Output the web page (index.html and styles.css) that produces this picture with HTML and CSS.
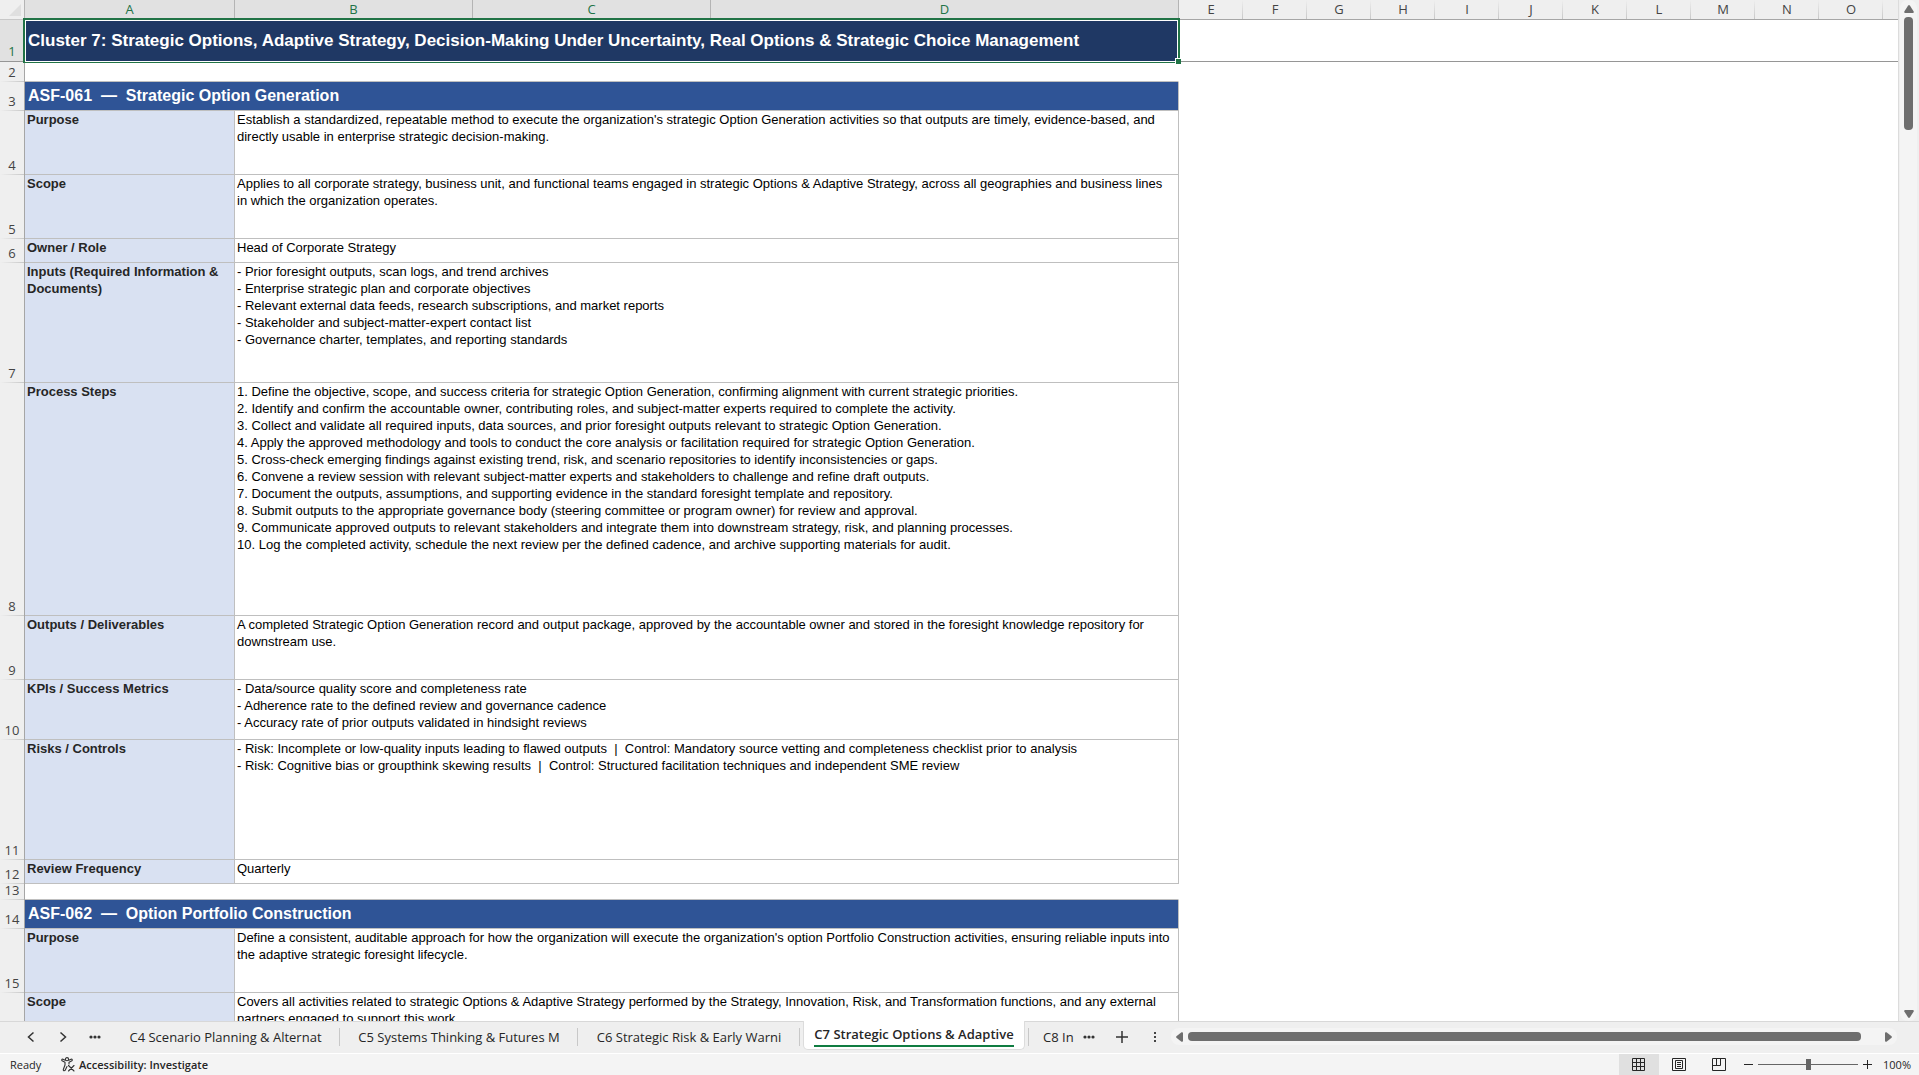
FILE: index.html
```html
<!DOCTYPE html>
<html lang="en">
<head>
<meta charset="utf-8">
<title>Strategic Foresight Workbook</title>
<link rel="stylesheet" href="styles.css">
</head>
<body>
<div class="app">
  <main class="workspace">
    <div class="sheet">
      <table class="grid">
        <colgroup>
          <col class="col-num"><col class="col-a"><col class="col-b"><col class="col-b"><col class="col-d">
          <col class="col-std"><col class="col-std"><col class="col-std"><col class="col-std"><col class="col-std"><col class="col-std"><col class="col-std"><col class="col-std"><col class="col-std"><col class="col-std"><col class="col-std"><col>
        </colgroup>
        <thead>
          <tr>
            <td class="corner"><svg width="12" height="12" viewBox="0 0 12 12"><path d="M12 0V12H0Z" fill="#dfdfdf"/></svg></td>
            <th class="picked">A</th><th class="picked">B</th><th class="picked">C</th><th class="picked">D</th>
            <th>E</th><th>F</th><th>G</th><th>H</th><th>I</th><th>J</th><th>K</th><th>L</th><th>M</th><th>N</th><th>O</th><th></th>
          </tr>
        </thead>
        <tbody>
          <tr class="h-title frozen"><th class="picked">1</th><td class="title" colspan="4">Cluster 7: Strategic Options, Adaptive Strategy, Decision-Making Under Uncertainty, Real Options &amp; Strategic Choice Management<span class="selection"></span><span class="handle"></span></td><td class="rest" colspan="12"></td></tr>
          <tr class="h-gap"><th>2</th><td class="gap" colspan="4"></td><td class="rest" colspan="12"></td></tr>
          <tr class="h-section"><th>3</th><td class="section" colspan="4">ASF-061 &nbsp;—&nbsp; Strategic Option Generation</td><td class="rest" colspan="12"></td></tr>
          <tr class="h-text"><th>4</th><td class="label">Purpose</td><td class="value" colspan="3">Establish a standardized, repeatable method to execute the organization's strategic Option Generation activities so that outputs are timely, evidence-based, and<br>directly usable in enterprise strategic decision-making.</td><td class="rest" colspan="12"></td></tr>
          <tr class="h-text"><th>5</th><td class="label">Scope</td><td class="value" colspan="3">Applies to all corporate strategy, business unit, and functional teams engaged in strategic Options &amp; Adaptive Strategy, across all geographies and business lines<br>in which the organization operates.</td><td class="rest" colspan="12"></td></tr>
          <tr class="h-line"><th>6</th><td class="label">Owner / Role</td><td class="value" colspan="3">Head of Corporate Strategy</td><td class="rest" colspan="12"></td></tr>
          <tr class="h-list"><th>7</th><td class="label">Inputs (Required Information &amp;<br>Documents)</td><td class="value" colspan="3">- Prior foresight outputs, scan logs, and trend archives<br>- Enterprise strategic plan and corporate objectives<br>- Relevant external data feeds, research subscriptions, and market reports<br>- Stakeholder and subject-matter-expert contact list<br>- Governance charter, templates, and reporting standards</td><td class="rest" colspan="12"></td></tr>
          <tr class="h-steps"><th>8</th><td class="label">Process Steps</td><td class="value" colspan="3">1. Define the objective, scope, and success criteria for strategic Option Generation, confirming alignment with current strategic priorities.<br>2. Identify and confirm the accountable owner, contributing roles, and subject-matter experts required to complete the activity.<br>3. Collect and validate all required inputs, data sources, and prior foresight outputs relevant to strategic Option Generation.<br>4. Apply the approved methodology and tools to conduct the core analysis or facilitation required for strategic Option Generation.<br>5. Cross-check emerging findings against existing trend, risk, and scenario repositories to identify inconsistencies or gaps.<br>6. Convene a review session with relevant subject-matter experts and stakeholders to challenge and refine draft outputs.<br>7. Document the outputs, assumptions, and supporting evidence in the standard foresight template and repository.<br>8. Submit outputs to the appropriate governance body (steering committee or program owner) for review and approval.<br>9. Communicate approved outputs to relevant stakeholders and integrate them into downstream strategy, risk, and planning processes.<br>10. Log the completed activity, schedule the next review per the defined cadence, and archive supporting materials for audit.</td><td class="rest" colspan="12"></td></tr>
          <tr class="h-text"><th>9</th><td class="label">Outputs / Deliverables</td><td class="value" colspan="3">A completed Strategic Option Generation record and output package, approved by the accountable owner and stored in the foresight knowledge repository for<br>downstream use.</td><td class="rest" colspan="12"></td></tr>
          <tr class="h-kpi"><th>10</th><td class="label">KPIs / Success Metrics</td><td class="value" colspan="3">- Data/source quality score and completeness rate<br>- Adherence rate to the defined review and governance cadence<br>- Accuracy rate of prior outputs validated in hindsight reviews</td><td class="rest" colspan="12"></td></tr>
          <tr class="h-list"><th>11</th><td class="label">Risks / Controls</td><td class="value" colspan="3">- Risk: Incomplete or low-quality inputs leading to flawed outputs &nbsp;|&nbsp; Control: Mandatory source vetting and completeness checklist prior to analysis<br>- Risk: Cognitive bias or groupthink skewing results &nbsp;|&nbsp; Control: Structured facilitation techniques and independent SME review</td><td class="rest" colspan="12"></td></tr>
          <tr class="h-line"><th>12</th><td class="label">Review Frequency</td><td class="value" colspan="3">Quarterly</td><td class="rest" colspan="12"></td></tr>
          <tr class="h-slim"><th>13</th><td class="gap" colspan="4"></td><td class="rest" colspan="12"></td></tr>
          <tr class="h-section"><th>14</th><td class="section" colspan="4">ASF-062 &nbsp;—&nbsp; Option Portfolio Construction</td><td class="rest" colspan="12"></td></tr>
          <tr class="h-text"><th>15</th><td class="label">Purpose</td><td class="value" colspan="3">Define a consistent, auditable approach for how the organization will execute the organization's option Portfolio Construction activities, ensuring reliable inputs into<br>the adaptive strategic foresight lifecycle.</td><td class="rest" colspan="12"></td></tr>
          <tr class="h-text"><th></th><td class="label">Scope</td><td class="value" colspan="3">Covers all activities related to strategic Options &amp; Adaptive Strategy performed by the Strategy, Innovation, Risk, and Transformation functions, and any external<br>partners engaged to support this work.</td><td class="rest" colspan="12"></td></tr>
        </tbody>
      </table>
    </div>
    <div class="vbar">
      <button class="arrow" aria-label="Scroll up"><svg width="10" height="8" viewBox="0 0 10 8"><path d="M4 .8Q5-.6 6 .8L9.7 6.500Q10 8 9 8H1Q0 8 .3 6.500Z"/></svg></button>
      <div class="vthumb"></div>
      <button class="arrow" aria-label="Scroll down"><svg width="10" height="8" viewBox="0 0 10 8"><path d="M4 7.200Q5 8.600 6 7.200L9.700 1.500Q10 0 9 0H1Q0 0 .3 1.500Z"/></svg></button>
    </div>
  </main>

  <nav class="tabbar" aria-label="Sheets">
    <div class="tabnav">
      <button aria-label="Previous sheet"><svg width="12" height="12" viewBox="0 0 12 12"><path d="M8.500 1.500L3.500 6l5 4.500" class="line"/></svg></button>
      <button aria-label="Next sheet"><svg width="12" height="12" viewBox="0 0 12 12"><path d="M3.500 1.500L8.500 6l-5 4.500" class="line"/></svg></button>
      <button aria-label="More sheets"><svg width="12" height="12" viewBox="0 0 12 12"><g fill="#333"><circle cx="2" cy="6" r="1.600"/><circle cx="6" cy="6" r="1.600"/><circle cx="10" cy="6" r="1.600"/></g></svg></button>
    </div>
    <button class="tab">C4 Scenario Planning &amp; Alternat</button>
    <button class="tab">C5 Systems Thinking &amp; Futures M</button>
    <button class="tab">C6 Strategic Risk &amp; Early Warni</button>
    <button class="tab active"><span>C7 Strategic Options &amp; Adaptive</span></button>
    <button class="tab cut">C8 In</button>
    <div class="tabtools">
      <button aria-label="Sheet list"><svg width="12" height="12" viewBox="0 0 12 12"><g fill="#333"><circle cx="2" cy="6" r="1.600"/><circle cx="6" cy="6" r="1.600"/><circle cx="10" cy="6" r="1.600"/></g></svg></button>
      <button aria-label="New sheet"><svg width="12" height="12" viewBox="0 0 12 12"><path d="M6 0v12M0 6h12" class="line"/></svg></button>
      <button aria-label="Resize tabs"><svg width="12" height="12" viewBox="0 0 12 12"><g fill="#444"><rect x="5" y="1" width="2" height="2"/><rect x="5" y="5" width="2" height="2"/><rect x="5" y="9" width="2" height="2"/></g></svg></button>
    </div>
    <div class="hbar">
      <button class="arrow" aria-label="Scroll left"><svg width="7" height="10" viewBox="0 0 7 10"><path d="M.7 4Q-.5 5 .7 6L5.500 9.700Q7 10 7 9V1Q7 0 5.500 .3Z"/></svg></button>
      <div class="hthumb"></div>
      <button class="arrow" aria-label="Scroll right"><svg width="7" height="10" viewBox="0 0 7 10"><path d="M6.300 4Q7.500 5 6.300 6L1.500 9.700Q0 10 0 9V1Q0 0 1.500 .3Z"/></svg></button>
    </div>
  </nav>

  <footer class="status">
    <span class="ready">Ready</span>
    <button class="access">
      <svg width="14" height="15" viewBox="0 0 14 15"><g fill="none" stroke="#333" stroke-width="1.100" stroke-linecap="round" stroke-linejoin="round"><circle cx="6" cy="2.200" r="1.600"/><path d="M4.200 3.200L2 2.200Q.8 2 .7 3 .7 3.700 1.500 4L4 5.200V8L2.300 12.500Q2.200 13.800 3.200 13.800 4 13.800 4.300 13L6 9.500M7.800 3.200L10 2.200Q11.200 2 11.300 3 11.300 3.700 10.500 4L8 5.200V7"/><path d="M7.500 8.500l5.500 5.500M13 8.500L7.500 14"/></g></svg>
      <span>Accessibility: Investigate</span>
    </button>
    <div class="views">
      <button class="on" aria-label="Normal view"><svg width="14" height="14" viewBox="0 0 14 14"><path d="M.5 .5h12v12H.5zM4.500 .5v12M8.500 .5v12M.5 4.500h12M.5 8.500h12" class="box"/></svg></button>
      <button aria-label="Page layout"><svg width="14" height="14" viewBox="0 0 14 14"><path d="M.5 .5h13v12H.5zM3.500 2.500h7v8h-7zM5 4.500h4M5 6.500h4M5 8.500h4" class="box"/></svg></button>
      <button aria-label="Page break preview"><svg width="14" height="14" viewBox="0 0 14 14"><path d="M.5 .5h13v12H.5zM4.500 .5v7M8.500 .5v7M.5 7.500h8" class="box"/></svg></button>
    </div>
    <div class="zoom">
      <button aria-label="Zoom out"><svg width="9" height="9" viewBox="0 0 9 9"><path d="M0 4.500h9" class="box"/></svg></button>
      <input type="range" min="0" max="100" value="50" aria-label="Zoom">
      <button aria-label="Zoom in"><svg width="9" height="9" viewBox="0 0 9 9"><path d="M0 4.500h9M4.500 0v9" class="box"/></svg></button>
      <button class="pct">100%</button>
    </div>
  </footer>
</div>
</body>
</html>
```
FILE: styles.css
```css
* { box-sizing: border-box; }

body {
  margin: 0;
  background: #efefef;
  color: #262626;
  font-family: "Open Sans", "Noto Sans", sans-serif;
}

button {
  border: 0;
  padding: 0;
  background: none;
  color: inherit;
  font: inherit;
  display: flex;
  align-items: center;
  justify-content: center;
}

svg { display: block; }
.line { fill: none; stroke: #333; stroke-width: 1.5; }
.box { fill: none; stroke: #262626; }

.app {
  height: 100vh;
  display: flex;
  flex-direction: column;
}

/* worksheet */
.workspace {
  flex: 1;
  min-height: 0;
  display: flex;
}

.sheet {
  flex: 1;
  min-width: 0;
  overflow: hidden;
  background: #fff;
  border-right: 1px solid #dcdcdc;
}

.grid {
  width: 100%;
  table-layout: fixed;
  border-collapse: separate;
  border-spacing: 0;
}

.col-num { width: 25px; }
.col-a { width: 210px; }
.col-b { width: 238px; }
.col-d { width: 468px; }
.col-std { width: 64px; }

.grid th, .grid td { padding: 0; }
.grid td { overflow: hidden; }

.grid thead tr { height: 20px; }
.grid thead th {
  background: linear-gradient(#efefef, #c8c8c8) right / 1px 100% no-repeat #efefef;
  border-bottom: 1px solid #a6a6a6;
  color: #444;
  font-size: 13px;
  font-weight: 400;
  line-height: 19px;
}
.grid thead th.picked {
  background: #e1e1e1;
  border-right: 1px solid #b4b4b4;
  color: #217346;
}
.grid thead th:last-child { background: #efefef; }
.corner {
  background: #efefef;
  border-right: 1px solid #b4b4b4;
  border-bottom: 1px solid #c8c8c8;
}
.corner svg { margin-left: 9px; }

.grid tbody th {
  background: linear-gradient(90deg, #efefef, #c8c8c8) bottom / 100% 1px no-repeat #efefef;
  border-right: 1px solid #a6a6a6;
  padding-bottom: 3px;
  color: #444;
  font-size: 13px;
  font-weight: 400;
  line-height: 13px;
  vertical-align: bottom;
}
.grid tbody th.picked { background: #e1e1e1; color: #217346; }

.h-title { height: 42px; }
.h-gap { height: 20px; }
.h-section { height: 29px; }
.h-text { height: 64px; }
.h-line { height: 24px; }
.h-list { height: 120px; }
.h-steps { height: 233px; }
.h-kpi { height: 60px; }
.h-slim { height: 16px; }

.title, .section, .label, .value { font-family: "Liberation Sans", Arial, sans-serif; }

.grid .title {
  position: relative;
  overflow: visible;
  padding-left: 3px;
  background: #1f3864;
  color: #fff;
  font-size: 17px;
  font-weight: 700;
}
.frozen > * { border-bottom: 1px solid #969696; }
.selection {
  position: absolute;
  inset: -2px -1px -2px -2px;
  border: 2px solid #217346;
  border-bottom-width: 1px;
  box-shadow: inset 0 0 0 1px #fff;
}
.handle {
  position: absolute;
  right: -2px;
  bottom: -3px;
  width: 6px;
  height: 6px;
  background: #217346;
  border: solid #fff;
  border-width: 1px 0 0 1px;
}

.gap, .section, .label, .value {
  border-right: 1px solid #bfbfbf;
  border-bottom: 1px solid #bfbfbf;
}
.gap { border-right-color: transparent; }
.grid .section {
  padding-left: 3px;
  background: #2f5496;
  color: #fff;
  font-size: 16px;
  font-weight: 700;
}
.grid .label, .grid .value {
  padding-left: 2px;
  font-size: 13px;
  line-height: 17px;
  vertical-align: top;
  white-space: nowrap;
}
.label { background: #d9e1f2; font-weight: 700; }
.value { color: #000; }

/* scroll bars */
.arrow { flex: none; }
.arrow svg { fill: #6e6e6e; }
.vbar {
  flex: none;
  width: 17px;
  margin: 0 2px 0 1px;
  padding: 5px 0 3px;
  border-radius: 8px;
  background: #f4f4f4;
  display: flex;
  flex-direction: column;
  align-items: center;
}
.vthumb {
  width: 9px;
  height: 113px;
  margin: 4px 0 auto;
  border-radius: 4px;
  background: #6e6e6e;
}
.hbar {
  flex: 1;
  height: 17px;
  margin: 6px 22px 0 0;
  padding: 0 5px;
  border-radius: 8px;
  background: #f4f4f4;
  display: flex;
  align-items: center;
}
.hthumb {
  flex: 1;
  height: 9px;
  margin: 0 24px 0 5px;
  border-radius: 4px;
  background: #6e6e6e;
}

/* sheet tabs */
.tabbar {
  flex: none;
  height: 32px;
  border-top: 1px solid #d8d8d8;
  display: flex;
  align-items: flex-start;
  font-size: 13px;
}
.tabnav {
  width: 111px;
  height: 30px;
  padding-left: 25px;
  display: flex;
  gap: 20px;
}
.tab {
  position: relative;
  width: 238px;
  height: 30px;
  white-space: nowrap;
}
.tab:nth-of-type(1) { width: 229px; }
.tab:nth-of-type(3) { width: 222px; }
.tab:not(.active)::after {
  content: "";
  position: absolute;
  right: 0;
  top: 6px;
  width: 1px;
  height: 18px;
  background: #c8c8c8;
}
.tab.active {
  width: 222px;
  height: 29px;
  margin: -1px 3px 0 3px;
  border: 1px solid #dcdcdc;
  border-top: 0;
  border-radius: 0 0 5px 5px;
  background: #fff;
  font-weight: 600;
}
.active span {
  line-height: 21px;
  border-bottom: 2px solid #107c41;
}
.tab.cut {
  width: 46px;
  padding-left: 15px;
  justify-content: flex-start;
}
.tab.cut::after { right: auto; left: 0; }
.tabtools {
  width: 97px;
  height: 30px;
  padding-left: 9px;
  display: flex;
  gap: 21px;
}

/* status bar */
.status {
  flex: none;
  height: 22px;
  padding: 0 8px 0 10px;
  border-top: 1px solid #fff;
  background: #f4f4f4;
  display: flex;
  font-size: 11px;
  line-height: 21px;
}
.ready { width: 51px; }
.access { gap: 4px; font-weight: 600; }
.views { margin-left: auto; display: flex; }
.views button { width: 40px; }
.views .on { background: #e0e0e0; }
.zoom {
  margin-left: 5px;
  display: flex;
  align-items: center;
  gap: 5px;
}
.zoom input {
  appearance: none;
  width: 100px;
  height: 12px;
  margin: 0;
  background: linear-gradient(#666, #666) center / 100% 1px no-repeat;
}
.zoom input::-webkit-slider-thumb {
  appearance: none;
  width: 5px;
  height: 11px;
  background: #666;
}
.pct { width: 34px; justify-content: flex-end; }
```
